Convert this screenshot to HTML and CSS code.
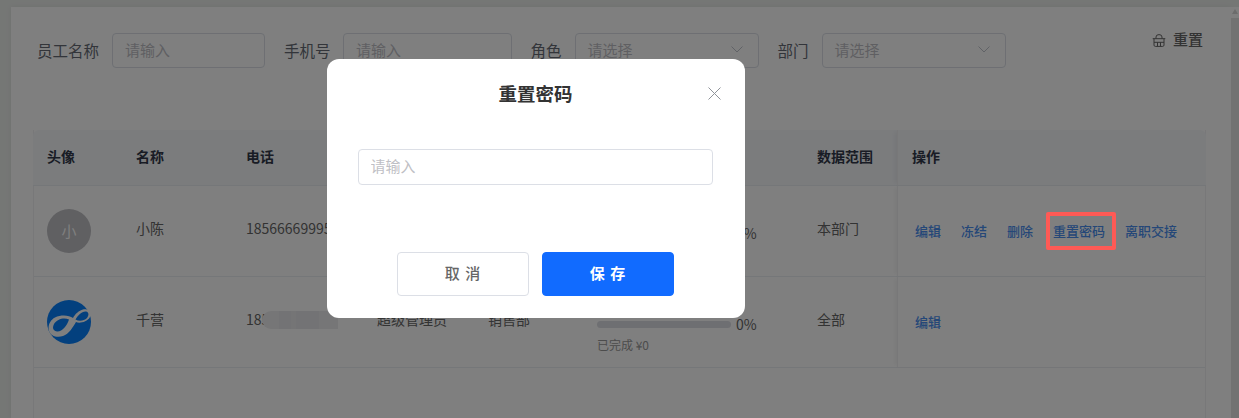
FILE: index.html
```html
<!DOCTYPE html>
<html lang="zh-CN">
<head>
<meta charset="utf-8">
<title>员工管理</title>
<link rel="stylesheet" href="styles.css">
</head>
<body>
<div class="app">
  <main class="panel">
    <form class="filters">
      <label class="label l-name">员工名称</label>
      <input class="field f-name" placeholder="请输入">
      <label class="label l-next">手机号</label>
      <input class="field f-phone" placeholder="请输入">
      <label class="label l-next">角色</label>
      <div class="field select f-role"><span>请选择</span><svg class="chev" viewBox="0 0 12 7"><path d="M.5.5 6 6l5.500-5.500"/></svg></div>
      <label class="label l-next">部门</label>
      <div class="field select f-dept"><span>请选择</span><svg class="chev" viewBox="0 0 12 7"><path d="M.5.5 6 6l5.500-5.500"/></svg></div>
      <button type="button" class="reset">
        <svg viewBox="0 0 14 13"><path d="M.7 4.700h12.600M2 4.700v6.400c0 .8.500 1.300 1.300 1.300h7.400c.8 0 1.300-.5 1.300-1.300V4.700M4 4.700V3a3 2.400 0 0 1 6 0v1.700M2 8.300h10M5.500 8.300v4M8.500 8.300v4"/></svg>
        <span>重置</span>
      </button>
    </form>
    <section class="table">
      <div class="row head">
        <div>头像</div><div>名称</div><div>电话</div><div>角色</div><div>部门</div><div>业绩</div><div>数据范围</div><div class="ops">操作</div>
      </div>
      <div class="row">
        <div class="cell-media"><span class="avatar">小</span></div>
        <div>小陈</div>
        <div>18566669995</div>
        <div>销售</div>
        <div>销售部</div>
        <div class="progress"><div class="bar-line"><i class="bar"></i><span>0%</span></div><small>已完成 ¥0</small></div>
        <div>本部门</div>
        <div class="ops links"><a>编辑</a><a>冻结</a><a>删除</a><a>重置密码</a><a>离职交接</a></div>
      </div>
      <div class="row">
        <div class="cell-media">
          <svg class="logo" viewBox="0 0 44 44">
            <circle cx="22" cy="22" r="22" fill="#0680fc"/>
            <path fill="#fff" fill-rule="evenodd" d="M26 18C22 15 14 14.500 8 17.500 3 20 .5 26 2 31c1.500 5 8 7 14 5 6-2 10-9 13-14 3 1.500 11 .5 14-5 2-5-2-8.500-7-7.500-4 1-8 4.500-10 8.500ZM22 19.500C17 17 10 19 7 24c-2 4-1 7 3 7.500 5 .5 10-5.500 12-12ZM28.500 19.500C31 15 35 11 39 11.500c3 .5 3 3.500 1 6.500-3 3-8 3.500-11.500 1.500Z"/>
          </svg>
        </div>
        <div>千营</div>
        <div class="phone">18566669995<i class="blur"></i></div>
        <div>超级管理员</div>
        <div>销售部</div>
        <div class="progress"><div class="bar-line"><i class="bar"></i><span>0%</span></div><small>已完成 ¥0</small></div>
        <div>全部</div>
        <div class="ops links"><a>编辑</a></div>
      </div>
    </section>
  </main>
  <aside class="scrollbar"><i class="arrow"></i><i class="thumb"></i></aside>
</div>
<div class="mask"></div>
<div class="dialog">
  <h2>重置密码</h2>
  <svg class="close" viewBox="0 0 13 13"><path d="M.5.500l12 12M12.500.500l-12 12"/></svg>
  <input class="dialog-input" placeholder="请输入">
  <div class="dialog-actions">
    <button type="button" class="btn">取 消</button>
    <button type="button" class="btn primary">保 存</button>
  </div>
</div>
<div class="callout"></div>
</body>
</html>
```

FILE: styles.css
```css
* { box-sizing: border-box; }
html, body { margin: 0; height: 100%; }
body {
  overflow: hidden;
  background: #ebeeeb;
  color: #666;
  font: 14px/20px "Noto Sans CJK SC", "Noto Sans", sans-serif;
}
.app { display: flex; height: 418px; }

.panel {
  flex: 1;
  display: flex;
  flex-direction: column;
  margin: 7px 0 0 11px;
  padding: 26px 25px 0 22px;
  background: #fff;
  box-shadow: 0 0 6px rgba(0, 0, 0, .06);
}
.filters { display: flex; align-items: center; height: 35px; flex: none; }
.label { font-size: 15.500px; color: #666b75; white-space: nowrap; padding-bottom: 2px; }
.l-name { margin-left: 4px; }
.l-next { margin-left: 19px; }
.field {
  height: 35px;
  margin-left: 13px;
  border: 1px solid #dcdfe6;
  border-radius: 4px;
  padding: 0 12px 2px;
  background: #fff;
  font: inherit;
  font-size: 15px;
  color: #bfbfc5;
  outline: none;
}
.field::placeholder { color: #bfbfc5; opacity: 1; }
.f-name { width: 153px; }
.f-phone { width: 168.500px; margin-left: 12.500px; }
.f-role { width: 184px; }
.f-dept { width: 184px; }
.select { display: flex; align-items: center; justify-content: space-between; padding-right: 15px; }
.chev { width: 12px; height: 7px; fill: none; stroke: #c0c4cc; }
.reset {
  display: flex;
  align-items: center;
  gap: 7px;
  align-self: flex-start;
  margin: -4px 3px 0 auto;
  padding: 0;
  height: 20px;
  border: 0;
  background: none;
  font: inherit;
  font-size: 15px;
  font-weight: 500;
  color: #666;
}
.reset svg { width: 14px; height: 13px; fill: none; stroke: #666; stroke-width: 1; margin-top: 2px; }

.table {
  flex: 1;
  display: flex;
  flex-direction: column;
  margin-top: 62px;
  border-left: 1px solid #f0f1f3;
  border-right: 1px solid #f0f1f3;
}
.row {
  display: grid;
  grid-template-columns: 88px 110px 131px 111px 109px 220px 94px 1fr;
  height: 91px;
  border-bottom: 1px solid #ebeef2;
}
.row > div {
  display: flex;
  align-items: center;
  min-width: 0;
  padding: 0 0 6px 14px;
  white-space: nowrap;
}
.row > .cell-media { padding: 0 0 0 13px; }
.head {
  height: 56px;
  margin: 0 -1px;
  grid-template-columns: 89px 110px 131px 111px 109px 220px 94px 1fr;
  background: #f6f8fb;
  border-radius: 6px 6px 0 0;
  font-weight: 700;
  color: #33384a;
}
.head.row > div { padding-bottom: 4px; }
.row > .ops {
  box-shadow: -4px 0 4px -2px rgba(0, 0, 0, .05);
  border-left: 1px solid #f0f1f3;
}
.avatar {
  display: flex;
  align-items: center;
  justify-content: center;
  width: 44px;
  height: 44px;
  border-radius: 50%;
  background: #c0c0c4;
  color: #fff;
  font-size: 15px;
}
.logo { width: 44px; height: 44px; }
.row > .phone { position: relative; }
.blur {
  position: absolute;
  left: 30px;
  top: 34px;
  width: 76px;
  height: 18px;
  border-radius: 9px 9px 0 9px;
  background: linear-gradient(90deg, #ececee 0 22%, #e6e6ea 22% 38%, #eaeaec 38% 45%, #e6e6ea 45% 75%, #ededee 75%);
}
.row > .progress { display: block; padding: 43px 0 0 14px; }
.bar-line { display: flex; align-items: center; gap: 5px; height: 8px; }
.bar { width: 134px; height: 7px; border-radius: 4px; background: #dddee4; }
.progress small { display: block; margin-top: 9px; font-size: 12px; line-height: 16px; color: #999; }
.row > .links { gap: 20px; padding: 0 0 0 17px; color: #4a8ff0; font-size: 13px; font-weight: 500; }

.scrollbar { position: relative; flex: none; width: 8px; margin-top: 7px; background: #fff; }
.thumb { position: absolute; left: 0; right: 0; top: 11px; bottom: 0; background: #e5e5e5; }
.arrow { position: absolute; left: 1px; top: 2px; border: 3px solid transparent; border-bottom: 5px solid #d8d8d8; border-top: 0; }

.mask { position: fixed; inset: 0; background: rgba(0, 0, 0, .5); }
.dialog {
  position: fixed;
  left: 327px;
  top: 59px;
  width: 418px;
  height: 259px;
  padding: 19px 32px 0 31px;
  background: #fff;
  border-radius: 12px;
  display: flex;
  flex-direction: column;
}
.dialog h2 { margin: 0; height: 30px; font-size: 18.500px; line-height: 30px; text-align: center; color: #333; font-weight: 700; }
.close { position: absolute; left: 381px; top: 28px; width: 13px; height: 13px; fill: none; stroke: #8f9399; }
.dialog-input {
  margin-top: 41px;
  height: 36px;
  border: 1px solid #dcdfe6;
  border-radius: 4px;
  padding: 0 12px 3px 11.500px;
  font: inherit;
  font-size: 15px;
  outline: none;
}
.dialog-input::placeholder { color: #bfbfc5; opacity: 1; }
.dialog-actions { display: flex; justify-content: center; gap: 13px; margin-top: 67px; }
.btn {
  width: 132px;
  height: 44px;
  padding: 0 0 3px;
  border: 1px solid #dcdfe6;
  border-radius: 4px;
  background: #fff;
  color: #666;
  font: inherit;
  font-size: 15px;
  font-weight: 500;
  letter-spacing: 1px;
}
.primary { background: #116bff; border-color: #116bff; color: #fff; font-weight: 700; }
.callout {
  position: fixed;
  left: 1046px;
  top: 212px;
  width: 70px;
  height: 38px;
  border: 4px solid #ff5a55;
  border-radius: 2px;
}
```
